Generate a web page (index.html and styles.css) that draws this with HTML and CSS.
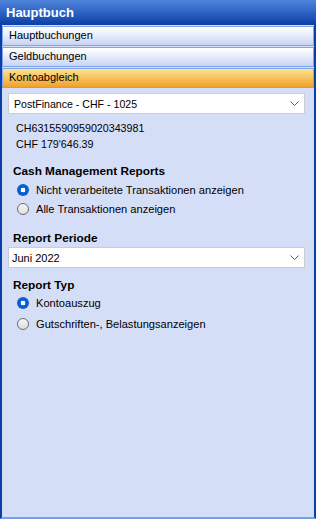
FILE: index.html
```html
<!DOCTYPE html>
<html>
<head>
<meta charset="utf-8">
<link rel="stylesheet" href="styles.css">
</head>
<body>
<div class="panel">
  <div class="header">Hauptbuch</div>
  <div class="tabs">
    <div class="tab">Hauptbuchungen</div>
    <div class="tab">Geldbuchungen</div>
    <div class="tab active">Kontoabgleich</div>
  </div>
  <div class="content">
    <div class="select first">
      <span>PostFinance - CHF - 1025</span>
      <svg class="chev" width="9" height="5" viewBox="0 0 9 5"><path d="M0.5 0.5 L4.5 4.5 L8.5 0.5" fill="none" stroke="#606060" stroke-width="1"/></svg>
    </div>
    <div class="info">
      <div>CH6315590959020343981</div>
      <div>CHF 179'646.39</div>
    </div>
    <div class="label cash">Cash Management Reports</div>
    <div class="radios first-group">
      <div class="radio"><span class="dot checked"></span>Nicht verarbeitete Transaktionen anzeigen</div>
      <div class="radio"><span class="dot"></span>Alle Transaktionen anzeigen</div>
    </div>
    <div class="label periode">Report Periode</div>
    <div class="select">
      <span>Juni 2022</span>
      <svg class="chev" width="9" height="5" viewBox="0 0 9 5"><path d="M0.5 0.5 L4.5 4.5 L8.5 0.5" fill="none" stroke="#606060" stroke-width="1"/></svg>
    </div>
    <div class="label typ">Report Typ</div>
    <div class="radios second-group">
      <div class="radio"><span class="dot checked"></span>Kontoauszug</div>
      <div class="radio"><span class="dot"></span>Gutschriften-, Belastungsanzeigen</div>
    </div>
  </div>
</div>
</body>
</html>
```

FILE: styles.css
```css
html, body {
  margin: 0;
  padding: 0;
}
body {
  width: 316px;
  height: 519px;
  overflow: hidden;
  font-family: "Liberation Sans", Arial, sans-serif;
  font-size: 11.1px;
  color: #000;
}
.panel {
  box-sizing: border-box;
  width: 316px;
  height: 519px;
  background: #d5def7;
  border-left: 2px solid #0b3fa8;
  border-right: 2px solid #0b3fa8;
  border-bottom: 2px solid #78a0e6;
  display: flex;
  flex-direction: column;
}
.header {
  height: 25px;
  margin: 0 -2px;
  padding-left: 6px;
  background: linear-gradient(#4f86da, #2a5fc2 55%, #0c3ea4);
  color: #fff;
  font-weight: bold;
  font-size: 13px;
  line-height: 25px;
}
.tabs {
  display: flex;
  flex-direction: column;
  gap: 1px;
  padding-top: 1px;
}
.tab {
  height: 18px;
  line-height: 17px;
  padding-left: 6px;
  border: 1px solid #80a5ea;
  background: linear-gradient(#ffffff, #e8edfb 45%, #c6d3f5);
  color: #000;
  font-size: 11px;
}
.tab.active {
  background: linear-gradient(#fbe28f, #f7c664 45%, #f0a02b);
}
.content {
  padding: 5px 9px 0 6px;
  display: flex;
  flex-direction: column;
}
.select {
  height: 19px;
  background: #fff;
  border: 1px solid #c9ccd3;
  display: flex;
  align-items: center;
  justify-content: space-between;
  padding: 0 5px 0 3px;
  font-size: 11px;
}
.select.first {
  padding-left: 5px;
  font-size: 10.6px;
}
.info {
  padding: 6px 0 0 8px;
  line-height: 16px;
  font-size: 10.7px;
}
.label {
  font-weight: bold;
  padding-left: 5px;
  line-height: 15px;
  font-size: 11.8px;
}
.cash { margin-top: 12px; }
.periode { margin-top: 13px; margin-bottom: 1px; }
.typ { margin-top: 10px; }
.radios {
  display: flex;
  flex-direction: column;
  padding-left: 9px;
}
.first-group { padding-top: 1px; }
.second-group { gap: 2px; }
.radio {
  height: 19px;
  display: flex;
  align-items: center;
}
.dot {
  box-sizing: border-box;
  width: 12px;
  height: 12px;
  border-radius: 50%;
  border: 1px solid #6c6c6c;
  background: linear-gradient(#f4f4f4, #e0e0e0);
  margin-right: 7px;
}
.dot.checked {
  border: none;
  background: radial-gradient(circle, #fff 0 2.2px, #0a5fd0 2.6px);
}
```
